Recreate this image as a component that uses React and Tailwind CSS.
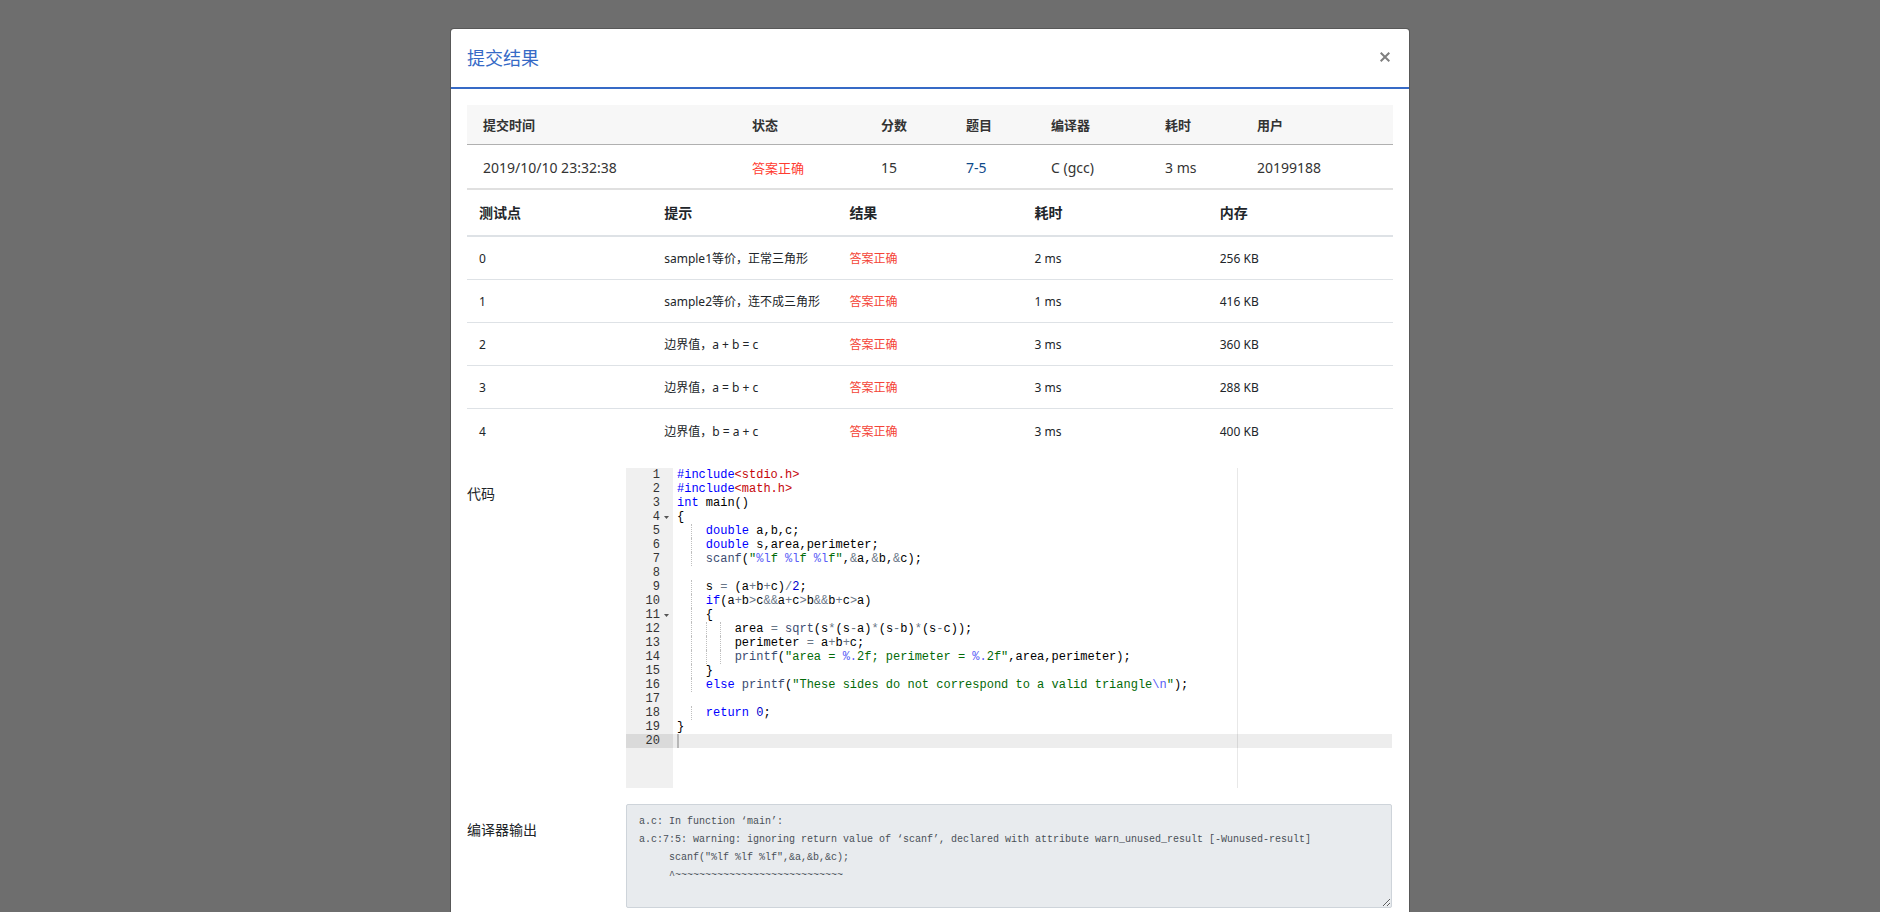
import React from 'react';

const submission = [
  { label: '提交时间', value: '2019/10/10 23:32:38', width: 'w-auto' },
  { label: '状态', value: '答案正确', width: 'w-[129px]', accepted: true },
  { label: '分数', value: '15', width: 'w-[85px]' },
  { label: '题目', value: '7-5', width: 'w-[85px]', link: true },
  { label: '编译器', value: 'C (gcc)', width: 'w-[114px]' },
  { label: '耗时', value: '3 ms', width: 'w-[92px]' },
  { label: '用户', value: '20199188', width: 'w-[152px]' },
];

const testPoints = [
  { id: 0, hint: 'sample1等价，正常三角形', result: '答案正确', time: '2 ms', memory: '256 KB' },
  { id: 1, hint: 'sample2等价，连不成三角形', result: '答案正确', time: '1 ms', memory: '416 KB' },
  { id: 2, hint: '边界值，a + b = c', result: '答案正确', time: '3 ms', memory: '360 KB' },
  { id: 3, hint: '边界值，a = b + c', result: '答案正确', time: '3 ms', memory: '288 KB' },
  { id: 4, hint: '边界值，b = a + c', result: '答案正确', time: '3 ms', memory: '400 KB' },
];

const tokenColors = {
  k: 'text-[#0000ff]',
  h: 'text-[#c5060b]',
  f: 'text-[#3c4c72]',
  s: 'text-[#036a07]',
  e: 'text-[#585cf6]',
  o: 'text-[#687687]',
  n: 'text-[#0000cd]',
  t: 'text-black',
};

// each line: indent (in spaces), optional fold marker, and [type, text] tokens
const codeLines = [
  { tokens: [['k', '#include'], ['h', '<stdio.h>']] },
  { tokens: [['k', '#include'], ['h', '<math.h>']] },
  { tokens: [['k', 'int'], ['t', ' main()']] },
  { fold: true, tokens: [['t', '{']] },
  { indent: 4, tokens: [['k', 'double'], ['t', ' a,b,c;']] },
  { indent: 4, tokens: [['k', 'double'], ['t', ' s,area,perimeter;']] },
  {
    indent: 4,
    tokens: [
      ['f', 'scanf'], ['t', '('], ['s', '"'], ['e', '%l'], ['s', 'f '], ['e', '%l'], ['s', 'f '], ['e', '%l'], ['s', 'f"'],
      ['t', ','], ['o', '&'], ['t', 'a,'], ['o', '&'], ['t', 'b,'], ['o', '&'], ['t', 'c);'],
    ],
  },
  { tokens: [] },
  {
    indent: 4,
    tokens: [['t', 's '], ['o', '='], ['t', ' (a'], ['o', '+'], ['t', 'b'], ['o', '+'], ['t', 'c)'], ['o', '/'], ['n', '2'], ['t', ';']],
  },
  {
    indent: 4,
    tokens: [
      ['k', 'if'], ['t', '(a'], ['o', '+'], ['t', 'b'], ['o', '>'], ['t', 'c'], ['o', '&&'], ['t', 'a'], ['o', '+'], ['t', 'c'],
      ['o', '>'], ['t', 'b'], ['o', '&&'], ['t', 'b'], ['o', '+'], ['t', 'c'], ['o', '>'], ['t', 'a)'],
    ],
  },
  { indent: 4, fold: true, tokens: [['t', '{']] },
  {
    indent: 8,
    tokens: [
      ['t', 'area '], ['o', '='], ['t', ' '], ['f', 'sqrt'], ['t', '(s'], ['o', '*'], ['t', '(s'], ['o', '-'], ['t', 'a)'], ['o', '*'],
      ['t', '(s'], ['o', '-'], ['t', 'b)'], ['o', '*'], ['t', '(s'], ['o', '-'], ['t', 'c));'],
    ],
  },
  { indent: 8, tokens: [['t', 'perimeter '], ['o', '='], ['t', ' a'], ['o', '+'], ['t', 'b'], ['o', '+'], ['t', 'c;']] },
  {
    indent: 8,
    tokens: [
      ['f', 'printf'], ['t', '('], ['s', '"area = '], ['e', '%.'], ['s', '2f; perimeter = '], ['e', '%.'], ['s', '2f"'],
      ['t', ',area,perimeter);'],
    ],
  },
  { indent: 4, tokens: [['t', '}']] },
  {
    indent: 4,
    tokens: [
      ['k', 'else'], ['t', ' '], ['f', 'printf'], ['t', '('], ['s', '"These sides do not correspond to a valid triangle'],
      ['e', '\\n'], ['s', '"'], ['t', ');'],
    ],
  },
  { tokens: [] },
  { indent: 4, tokens: [['k', 'return'], ['t', ' '], ['n', '0'], ['t', ';']] },
  { tokens: [['t', '}']] },
  { active: true, tokens: [] },
];

const compilerOutput = `a.c: In function ‘main’:
a.c:7:5: warning: ignoring return value of ‘scanf’, declared with attribute warn_unused_result [-Wunused-result]
     scanf("%lf %lf %lf",&a,&b,&c);
     ^~~~~~~~~~~~~~~~~~~~~~~~~~~~~`;

const Indent = ({ size }) => {
  const pairs = size / 2;
  return Array.from({ length: pairs }, (_, i) => (
    <span
      key={i}
      className={i < pairs - 1 ? 'inline-block h-[14px] -mr-px border-r border-dotted border-[#bfbfbf] align-top' : 'inline-block align-top'}
    >
      {'  '}
    </span>
  ));
};

const CodeEditor = () => (
  <div className="relative flex h-80 overflow-hidden bg-white font-['Liberation_Mono','Noto_Sans_CJK_SC',monospace] text-[12px] leading-[14px]">
    <div className="w-[47px] shrink-0 bg-[#f0f0f0] text-[#333]">
      {codeLines.map((line, i) => (
        <div key={i} className={`flex h-[14px] items-center justify-end pr-1 ${line.active ? 'bg-[#dadada]' : ''}`}>
          <span>{i + 1}</span>
          <span className="flex w-[9px] justify-end">
            {line.fold && (
              <svg className="h-[3px] w-[5px]" viewBox="0 0 5 3" fill="#555">
                <path d="M0 0h5L2.5 3z" />
              </svg>
            )}
          </span>
        </div>
      ))}
    </div>
    <div className="min-w-0 flex-1">
      {codeLines.map((line, i) => (
        <div key={i} className={`h-[14px] whitespace-pre pl-1 ${line.active ? 'bg-black/7' : ''}`}>
          {line.indent && <Indent size={line.indent} />}
          {line.tokens.map(([type, text], j) => (
            <span key={j} className={tokenColors[type]}>{text}</span>
          ))}
          {line.active && <span className="block h-[14px] w-[2px] bg-[#b8b8b8]" />}
        </div>
      ))}
    </div>
    {/* Print margin */}
    <div className="absolute inset-y-0 left-[611px] w-px bg-[#e8e8e8] mix-blend-multiply" />
  </div>
);

const App = () => {
  return (
    <div className="fixed inset-0 overflow-y-auto bg-[#6e6e6e] pr-5 [scrollbar-width:none] font-['Noto_Sans','Noto_Sans_CJK_SC',sans-serif] text-[#212529]">
      <div className="mx-auto my-7 max-w-[960px] rounded border border-black/20 bg-white bg-clip-padding">
        {/* Header */}
        <div className="flex h-[60px] items-start justify-between border-b-2 border-[#366ac6] px-4 pt-4">
          <h1 className="text-[18px] leading-[26px] font-normal text-[#366ac6]">提交结果</h1>
          <button type="button" aria-label="Close" className="flex h-6 w-4 cursor-pointer items-center justify-center text-[#7f7f7f]">
            <svg className="h-[10px] w-[10px]" viewBox="0 0 10 10" stroke="currentColor" strokeWidth="2">
              <path d="M0.7 0.7l8.6 8.6M9.3 0.7L0.7 9.3" />
            </svg>
          </button>
        </div>

        <div className="p-4">
          {/* Submission summary */}
          <table className="w-full table-fixed border-separate border-spacing-0 text-left text-[#333]">
            <thead>
              <tr className="h-10 bg-[#f7f7f7] text-[13px]">
                {submission.map((col) => (
                  <th key={col.label} className={`${col.width} border-b border-[#b0b0b0] px-4 pt-0.5 font-bold`}>{col.label}</th>
                ))}
              </tr>
            </thead>
            <tbody>
              <tr className="h-[45px] text-[14px]">
                {submission.map((col) => (
                  <td key={col.label} className="border-b-2 border-[#e0e0e0] px-4 pt-0.5 whitespace-nowrap">
                    {col.accepted && <span className="text-[13px] text-[#ff3b30]">{col.value}</span>}
                    {col.link && <a href="#problem" className="text-[#0f4a8a]">{col.value}</a>}
                    {!col.accepted && !col.link && col.value}
                  </td>
                ))}
              </tr>
            </tbody>
          </table>

          {/* Test points */}
          <table className="w-full table-fixed border-separate border-spacing-0 text-left">
            <thead>
              <tr className="h-[47px] text-[14px]">
                {['测试点', '提示', '结果', '耗时', '内存'].map((label) => (
                  <th key={label} className="border-b-2 border-[#dee2e6] px-3 font-bold">{label}</th>
                ))}
              </tr>
            </thead>
            <tbody className="text-[12px] [&>tr:last-child>td]:border-b-0">
              {testPoints.map((point) => (
                <tr key={point.id} className="h-[43px] [&>td]:border-b [&>td]:border-[#dee2e6] [&>td]:px-3 [&>td]:pt-0.5 [&>td]:whitespace-nowrap">
                  <td>{point.id}</td>
                  <td>{point.hint}</td>
                  <td className="text-[#f44336]">{point.result}</td>
                  <td>{point.time}</td>
                  <td>{point.memory}</td>
                </tr>
              ))}
            </tbody>
          </table>

          {/* Code */}
          <div className="mt-4 mr-px grid grid-cols-[159px_minmax(0,1fr)]">
            <h2 className="pt-4 text-[14px] leading-5">代码</h2>
            <CodeEditor />
          </div>

          {/* Compiler output */}
          <div className="mt-4 mr-px grid grid-cols-[159px_minmax(0,1fr)]">
            <label htmlFor="compiler-output" className="pt-4 text-[14px] leading-5">编译器输出</label>
            <textarea
              id="compiler-output"
              readOnly
              spellCheck={false}
              value={compilerOutput}
              className="block h-[104px] w-full resize rounded-xs border border-[#ced4da] bg-[#e8ebee] px-3 py-2 font-['Liberation_Mono','Noto_Sans_CJK_SC',monospace] text-[10px] leading-[18px] text-[#495057]"
            />
          </div>
        </div>
      </div>
    </div>
  );
};

export default App;
